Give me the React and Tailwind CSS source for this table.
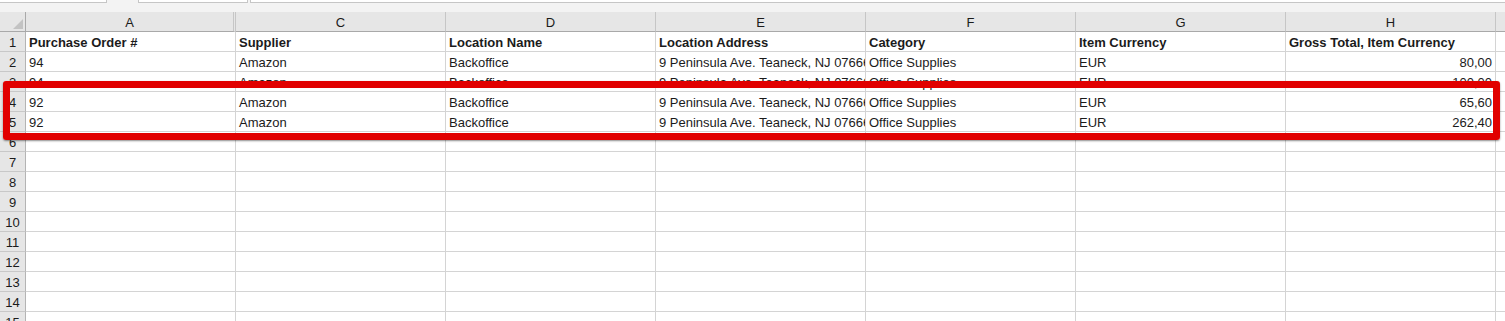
const columns = ["A", "C", "D", "E", "F", "G", "H"];

const rows = [
  ["Purchase Order #", "Supplier", "Location Name", "Location Address", "Category", "Item Currency", "Gross Total, Item Currency"],
  ["94", "Amazon", "Backoffice", "9 Peninsula Ave. Teaneck, NJ 07666", "Office Supplies", "EUR", "80,00"],
  ["94", "Amazon", "Backoffice", "9 Peninsula Ave. Teaneck, NJ 07666", "Office Supplies", "EUR", "100,00"],
  ["92", "Amazon", "Backoffice", "9 Peninsula Ave. Teaneck, NJ 07666", "Office Supplies", "EUR", "65,60"],
  ["92", "Amazon", "Backoffice", "9 Peninsula Ave. Teaneck, NJ 07666", "Office Supplies", "EUR", "262,40"],
];

const TOTAL_ROWS = 15;

function App() {
  return (
    <div
      className="relative h-[321px] w-full overflow-hidden bg-white text-[#1b1b1b]"
      style={{ fontFamily: '"Liberation Sans", Arial, sans-serif' }}
    >
      {/* formula bar remnants */}
      <div className="flex h-[12px] bg-[#f3f3f3]">
        <div className="h-[3px] w-[107px] border-b border-r border-[#c6c6c6] bg-white" />
        <div className="ml-[31px] h-[3px] w-[110px] border-b border-x border-[#c6c6c6] bg-white" />
        <div className="ml-[2px] h-[3px] flex-1 border-b border-l border-[#c6c6c6] bg-white" />
      </div>

      <div className="grid grid-cols-[26px_repeat(7,210px)_1fr]">
        {/* column headers */}
        <div className="relative h-[20px] border-b border-r border-[#a9a9a9] bg-[#e6e6e6]">
          <div className="absolute bottom-[2px] right-[2px] h-0 w-0 border-b-[10px] border-l-[10px] border-b-[#c3c3c3] border-l-transparent" />
        </div>
        {columns.map((c, i) => (
          <div
            key={c}
            className={
              "flex h-[20px] items-end justify-center border-b border-[#a9a9a9] bg-[#e6e6e6] pb-[1px] text-[13px] leading-[15px] " +
              (i === 0 ? "border-r-[3px] border-r-[#c6c6c6] border-double" : "border-r border-r-[#c6c6c6]")
            }
          >
            {c}
          </div>
        ))}
        <div className="h-[20px] border-b border-[#a9a9a9] bg-[#e6e6e6]" />

        {/* body rows */}
        {Array.from({ length: TOTAL_ROWS }, (_, r) => {
          const data = rows[r];
          return [
            <div
              key={"n" + r}
              className="flex h-[20px] items-end justify-center border-b border-r border-b-[#c8c8c8] border-r-[#b4b4b4] bg-[#e6e6e6] pb-[1px] text-[13px] leading-[15px]"
            >
              {r + 1}
            </div>,
            ...columns.map((c, i) => (
              <div
                key={c + r}
                className={
                  "flex h-[20px] items-end overflow-hidden whitespace-nowrap border-b border-r border-[#d4d4d4] pb-[1px] text-[13px] leading-[15px] " +
                  (i === 6 && r > 0 ? "justify-end pr-[3px]" : "pl-[3px]") +
                  (r === 0 ? " font-bold" : "")
                }
              >
                {data ? data[i] : ""}
              </div>
            )),
            <div key={"i" + r} className="h-[20px] border-b border-[#d4d4d4]" />,
          ];
        })}
      </div>

      {/* highlight around rows 4 and 5 */}
      <div className="absolute left-[3px] top-[81px] h-[59px] w-[1497px] rounded-[3px] border-[7px] border-[#e10000] shadow-[0_1px_2px_rgba(0,0,0,0.45)]" />
    </div>
  );
}

export default App;
